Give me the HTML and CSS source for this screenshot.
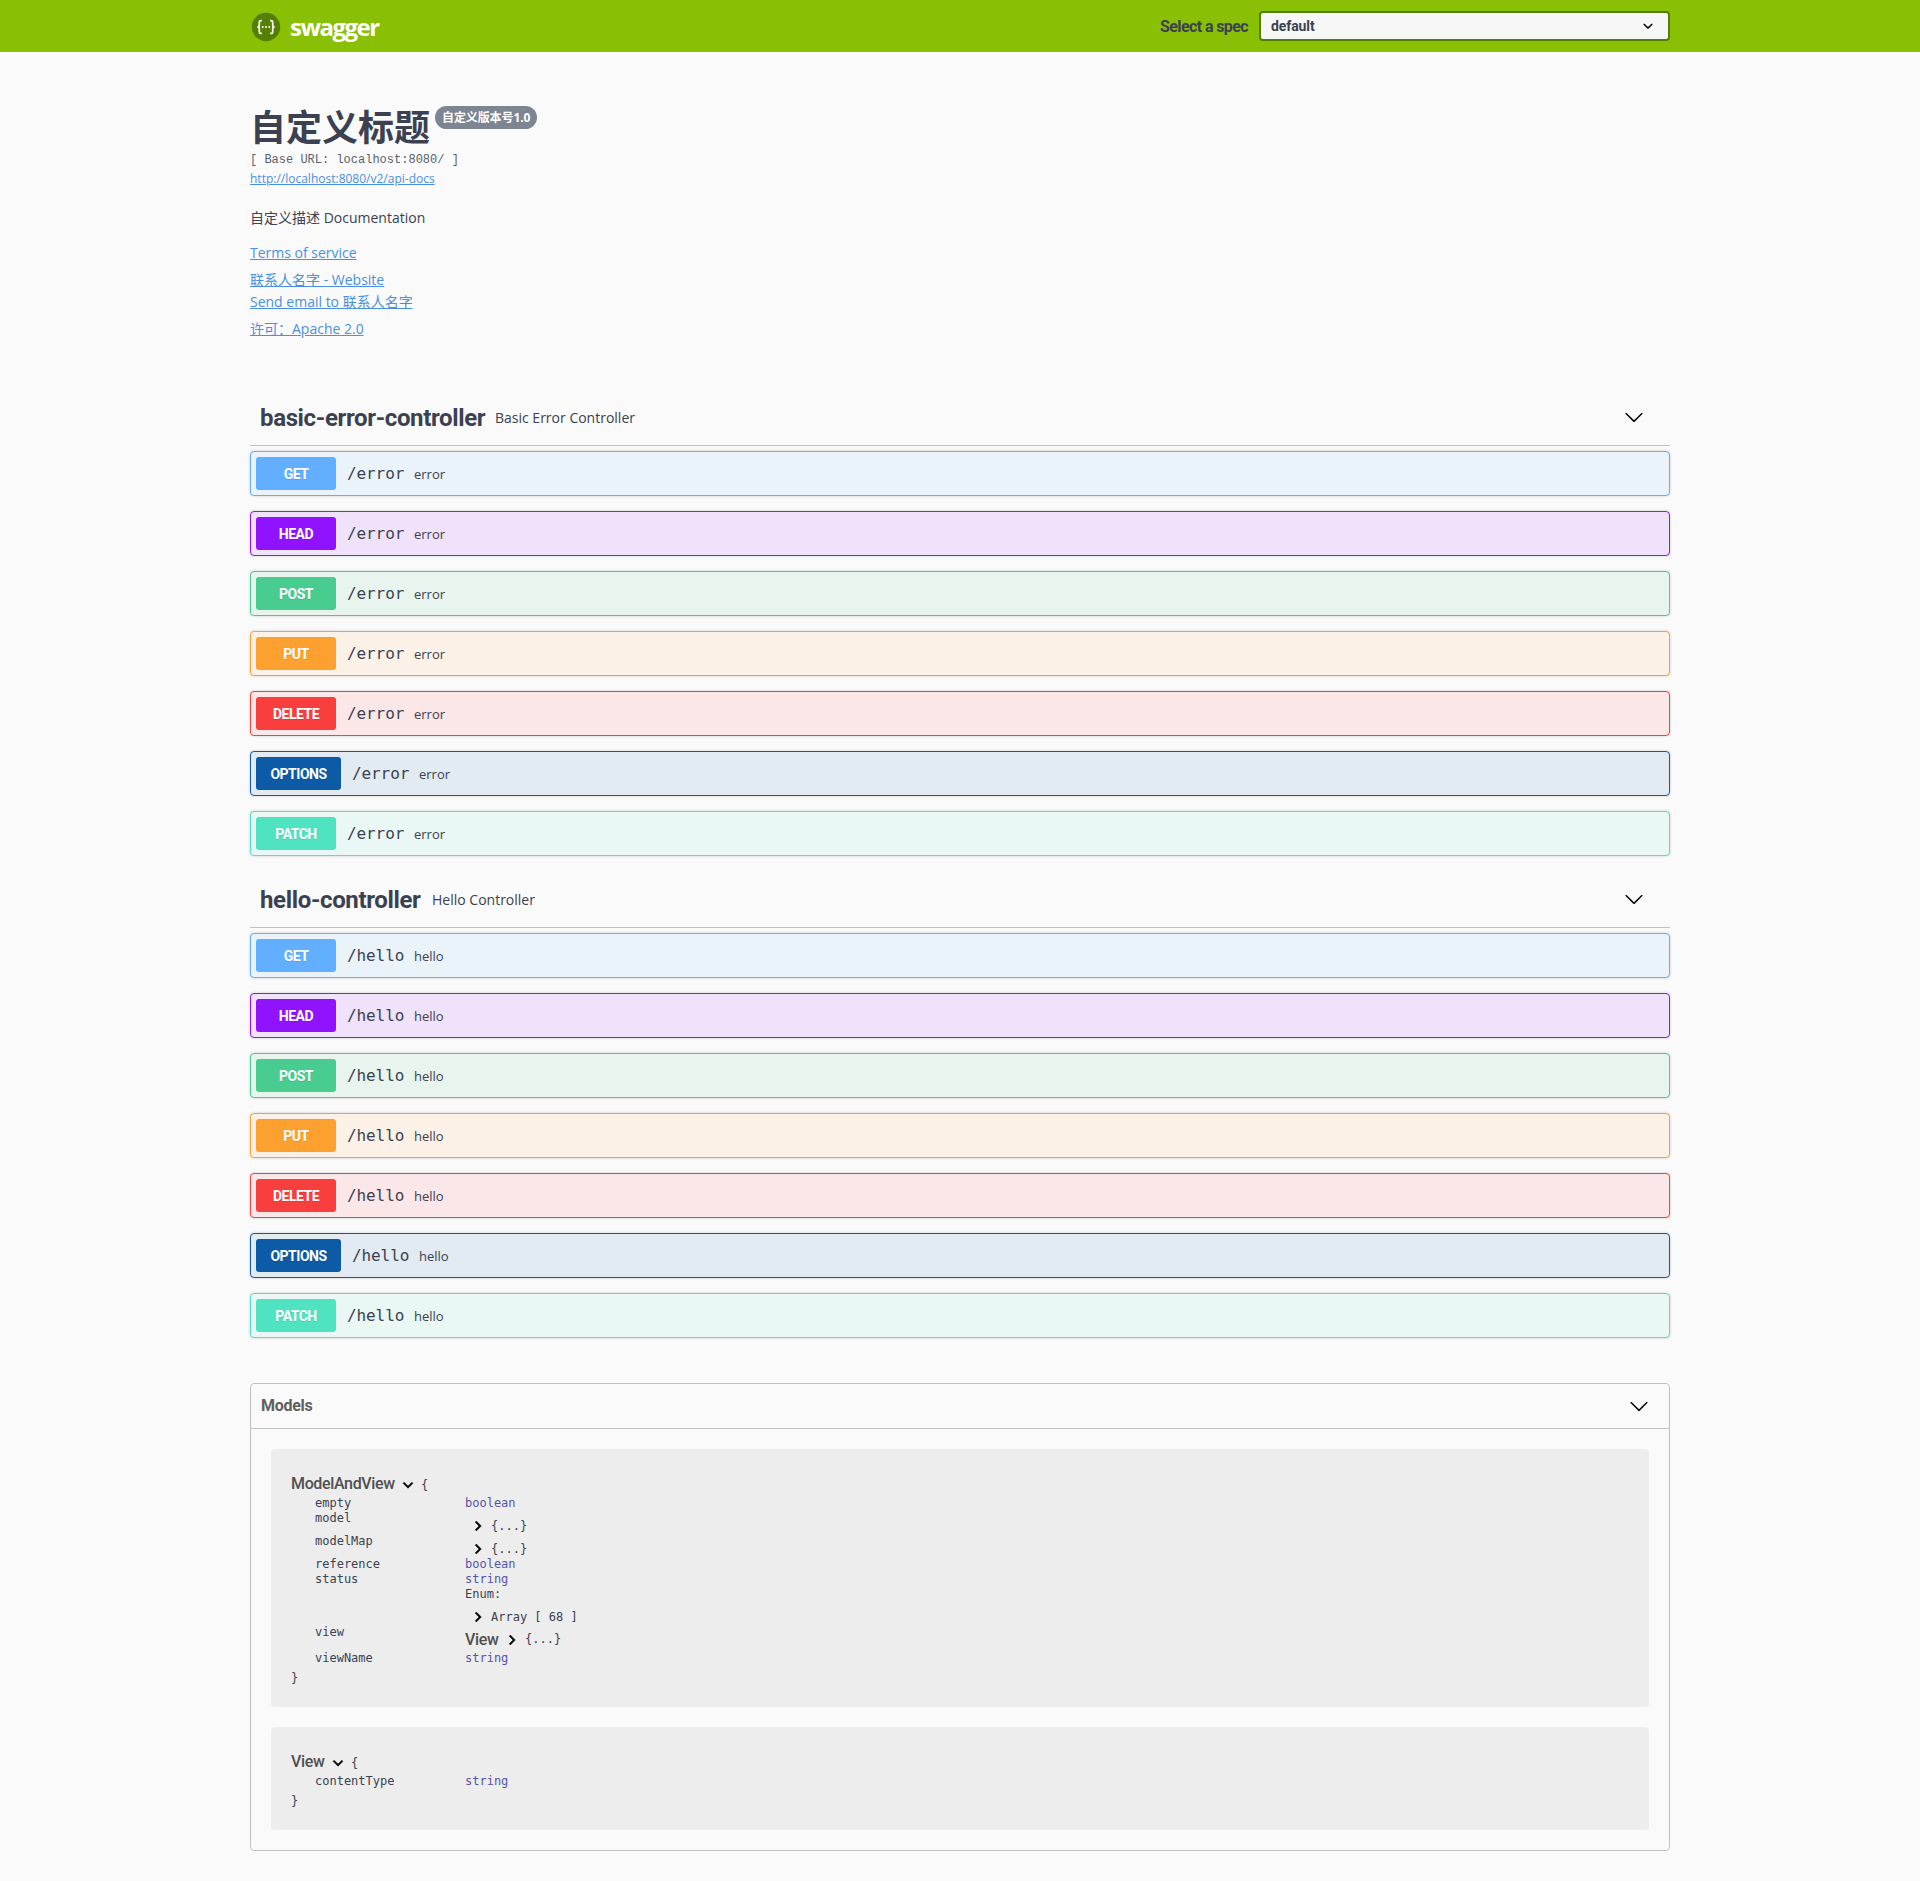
FILE: index.html
```html
<!DOCTYPE html>
<html lang="zh-CN">
<head>
<meta charset="utf-8">
<title>Swagger UI</title>
<link rel="stylesheet" href="styles.css">
</head>
<body>
<svg width="0" height="0" class="symbols">
  <symbol id="large-arrow" viewBox="0 0 20 20"><path d="M17.418 6.109c.272-.268.709-.268.979 0s.271.701 0 .969l-7.908 7.83c-.27.268-.707.268-.979 0l-7.908-7.83c-.27-.268-.27-.701 0-.969s.709-.268.979 0L10 13.25l7.418-7.141z"/></symbol>
  <symbol id="select-arrow" viewBox="0 0 20 20"><path d="M13.418 7.859c.271-.268.709-.268.978 0 .27.268.272.701 0 .969l-3.908 3.83c-.27.268-.707.268-.979 0l-3.908-3.83c-.27-.267-.27-.701 0-.969.271-.268.709-.268.978 0L10 11l3.418-3.141z"/></symbol>
  <symbol id="toggle" viewBox="0 0 24 24"><path d="M10 6L8.59 7.41 13.17 12l-4.58 4.59L10 18l6-6z"/></symbol>
</svg>
<header class="topbar">
  <div class="wrapper topbar-inner">
    <a class="logo">
      <svg width="30" height="30" viewBox="0 0 30 30"><circle cx="15" cy="15" r="14.2" fill="#547f00"/><g fill="none" stroke="#fff" stroke-width="1.7"><path d="M10.8 8.6H10q-1.700 0-1.700 1.700v2.700q0 2-2 2q2 0 2 2v2.700q0 1.700 1.700 1.700h.8"/><path d="M19.200 8.600h.8q1.700 0 1.700 1.700v2.700q0 2 2 2q-2 0-2 2v2.700q0 1.700-1.700 1.700h-.8"/></g><g fill="#fff"><circle cx="11.700" cy="15" r="1"/><circle cx="15" cy="15" r="1"/><circle cx="18.300" cy="15" r="1"/></g></svg>
      <span class="logo-text">swagger</span>
    </a>
    <div class="spec">
      <span class="spec-label">Select a spec</span>
      <div class="select"><span class="select-value">default</span><svg width="20" height="20"><use href="#select-arrow"/></svg></div>
    </div>
  </div>
</header>
<main class="wrapper">
  <section class="info">
    <div class="title-row"><h1 class="title">自定义标题</h1><span class="version">自定义版本号1.0</span></div>
    <div class="base-url">[ Base URL: localhost:8080/ ]</div>
    <a class="link docs-link">http://localhost:8080/v2/api-docs</a>
    <p class="description">自定义描述 Documentation</p>
    <div class="contact"><a class="link">Terms of service</a></div>
    <div class="contact person"><a class="link">联系人名字 - Website</a></div>
    <div class="contact email"><a class="link">Send email to 联系人名字</a></div>
    <div class="contact license"><a class="link">许可：Apache 2.0</a></div>
  </section>

  <section class="tag">
    <div class="tag-head"><h2 class="tag-name tag-error">basic-error-controller</h2><span class="tag-desc">Basic Error Controller</span><svg class="tag-arrow" width="20" height="20"><use href="#large-arrow"/></svg></div>
    <div class="ops">
      <div class="op get"><span class="method">GET</span><span class="path">/error</span><span class="summary">error</span></div>
      <div class="op head"><span class="method">HEAD</span><span class="path">/error</span><span class="summary">error</span></div>
      <div class="op post"><span class="method">POST</span><span class="path">/error</span><span class="summary">error</span></div>
      <div class="op put"><span class="method">PUT</span><span class="path">/error</span><span class="summary">error</span></div>
      <div class="op delete"><span class="method">DELETE</span><span class="path">/error</span><span class="summary">error</span></div>
      <div class="op options"><span class="method">OPTIONS</span><span class="path">/error</span><span class="summary">error</span></div>
      <div class="op patch"><span class="method">PATCH</span><span class="path">/error</span><span class="summary">error</span></div>
    </div>
  </section>

  <section class="tag">
    <div class="tag-head"><h2 class="tag-name tag-hello">hello-controller</h2><span class="tag-desc">Hello Controller</span><svg class="tag-arrow" width="20" height="20"><use href="#large-arrow"/></svg></div>
    <div class="ops">
      <div class="op get"><span class="method">GET</span><span class="path">/hello</span><span class="summary">hello</span></div>
      <div class="op head"><span class="method">HEAD</span><span class="path">/hello</span><span class="summary">hello</span></div>
      <div class="op post"><span class="method">POST</span><span class="path">/hello</span><span class="summary">hello</span></div>
      <div class="op put"><span class="method">PUT</span><span class="path">/hello</span><span class="summary">hello</span></div>
      <div class="op delete"><span class="method">DELETE</span><span class="path">/hello</span><span class="summary">hello</span></div>
      <div class="op options"><span class="method">OPTIONS</span><span class="path">/hello</span><span class="summary">hello</span></div>
      <div class="op patch"><span class="method">PATCH</span><span class="path">/hello</span><span class="summary">hello</span></div>
    </div>
  </section>

  <section class="models">
    <div class="models-head"><h4 class="models-title">Models</h4><svg width="20" height="20"><use href="#large-arrow"/></svg></div>
    <div class="models-body">
      <div class="model">
        <div class="model-head"><span class="model-name name-long">ModelAndView</span><svg class="toggle open" width="20" height="20"><use href="#toggle"/></svg><span>{</span></div>
        <div class="props">
          <span class="prop">empty</span><div class="type">boolean</div>
          <span class="prop">model</span><div class="nested"><svg class="toggle" width="20" height="20"><use href="#toggle"/></svg><span>{...}</span></div>
          <span class="prop">modelMap</span><div class="nested"><svg class="toggle" width="20" height="20"><use href="#toggle"/></svg><span>{...}</span></div>
          <span class="prop">reference</span><div class="type">boolean</div>
          <span class="prop">status</span><div><div class="type">string</div><div>Enum:</div><div class="nested"><svg class="toggle" width="20" height="20"><use href="#toggle"/></svg><span>Array [ 68 ]</span></div></div>
          <span class="prop">view</span><div class="ref"><span class="model-name">View</span><svg class="toggle" width="20" height="20"><use href="#toggle"/></svg><span>{...}</span></div>
          <span class="prop">viewName</span><div class="type">string</div>
        </div>
        <div class="close">}</div>
      </div>
      <div class="model">
        <div class="model-head"><span class="model-name">View</span><svg class="toggle open" width="20" height="20"><use href="#toggle"/></svg><span>{</span></div>
        <div class="props">
          <span class="prop">contentType</span><div class="type">string</div>
        </div>
        <div class="close">}</div>
      </div>
    </div>
  </section>
</main>
</body>
</html>
```
FILE: styles.css
```css
* { box-sizing: border-box; }
body {
  margin: 0;
  background: #fafafa;
  color: #3b4151;
  font-family: "Open Sans", "Noto Sans CJK SC", sans-serif;
  font-size: 14px;
}
h1, h2, h4, p { margin: 0; }
svg { display: block; flex: none; }
.symbols { position: absolute; }
.wrapper { width: 1420px; margin: 0 auto; }

.topbar { height: 52px; background: #89bf04; }
.topbar-inner { display: flex; justify-content: space-between; align-items: center; height: 52px; }
.logo { display: flex; align-items: center; gap: 9px; padding: 1px 0 0 1px; color: #fff; }
.logo-text { font: 700 24px/30px "Open Sans", sans-serif; letter-spacing: -1.5px; }
.spec { display: flex; align-items: center; }
.spec-label { width: 99px; padding-top: 2px; font: 700 16px/20px Roboto, sans-serif; letter-spacing: -0.6px; white-space: nowrap; }
.select {
  display: flex; align-items: center; justify-content: space-between;
  width: 411px; height: 30px; padding: 0 10px;
  border: 2px solid #547f00; border-radius: 4px; background: #f7f7f7;
  font: 700 14px/20px Roboto, sans-serif; letter-spacing: -0.1px;
}
.select svg { fill: #000; }

.info { height: 338px; padding-top: 50px; }
.title-row { display: flex; align-items: flex-start; height: 48px; }
.title { font: 700 36px/46px "Noto Sans CJK SC", sans-serif; }
.version {
  height: 23px; margin: 4px 0 0 5px; padding: 0 7px; width: 102px;
  border-radius: 57px; background: #7d8492; color: #fff;
  font: 700 12px/23px "Open Sans", "Noto Sans CJK SC", sans-serif;
  letter-spacing: -0.1px; white-space: nowrap;
}
.base-url { height: 18px; padding-top: 1px; font: 12px/18px "Liberation Mono", monospace; color: #5a5f6c; white-space: pre; }
.link { color: #4990e2; text-decoration: underline; }
.docs-link { display: block; height: 20px; font-size: 12px; line-height: 22px; }
.description { margin-top: 20px; line-height: 20px; }
.contact { height: 20px; margin-top: 15px; line-height: 20px; }
.person { margin-top: 7px; }
.email { margin-top: 2px; }
.license { margin-top: 7px; }

.tag-head {
  display: flex; align-items: center; height: 56px; margin-bottom: 5px;
  padding: 0 26px 0 10px; border-bottom: 1px solid #bfc1c5;
}
.tag-name { font: 700 24px/30px Roboto, sans-serif; letter-spacing: -0.35px; white-space: nowrap; }
.tag-error { width: 235px; }
.tag-hello { width: 172px; }
.tag-arrow { margin: -2px 0 0 auto; }
.ops { display: grid; gap: 15px; margin-bottom: 16px; }
.op {
  display: flex; align-items: center; height: 45px; padding: 5px;
  border: 1px solid var(--c); border-radius: 4px;
  background: var(--bg); box-shadow: 0 0 3px rgba(0, 0, 0, .19);
}
.method {
  min-width: 80px; height: 33px; border-radius: 3px;
  background: var(--c); color: #fff; text-align: center;
  font: 700 14px/35px Roboto, sans-serif; letter-spacing: -0.5px; text-shadow: 0 1px 0 rgba(0, 0, 0, .1);
}
.options .method { width: 85px; }
.path { margin: 1px 0 0 11px; width: 67px; font: 16px/22px "DejaVu Sans Mono", monospace; letter-spacing: -0.1px; }
.summary { font-size: 13px; line-height: 20px; }
.get { --c: #61affe; --bg: #ebf3fa; }
.head { --c: #9012fe; --bg: #efe2fa; }
.post { --c: #49cc90; --bg: #e8f5ef; }
.put { --c: #fca130; --bg: #fbf1e6; }
.delete { --c: #f93e3e; --bg: #fbe7e7; }
.options { --c: #0d5aa7; --bg: #e2eaf2; }
.patch { --c: #50e3c2; --bg: #e9f8f4; }

.models { margin-top: 45px; border: 1px solid #bfc1c5; border-radius: 4px; }
.models-head {
  display: flex; align-items: center; justify-content: space-between;
  height: 45px; padding: 0 20px 0 10px; border-bottom: 1px solid #bfc1c5;
}
.models-head svg { margin-top: -1px; }
.models-title { font: 700 16px/20px Roboto, sans-serif; letter-spacing: -0.3px; color: #606060; }
.models-body { display: grid; gap: 20px; padding: 20px; }
.model {
  padding: 23px 20px; border-radius: 4px; background: #ededed;
  font: 12px/15px "DejaVu Sans Mono", monospace;
}
.model-head { display: flex; align-items: center; height: 24px; }
.model-name { font: 500 16px/20px Roboto, sans-serif; letter-spacing: -0.35px; color: #505050; width: 35px; }
.name-long { width: 105px; }
.toggle { fill: #000; stroke: #000; stroke-width: .5; }
.open { transform: rotate(90deg); }
.model-head .toggle { margin: 1px 3px 0 2px; }
.model-head span:last-child { margin-top: 2px; }
.props { display: grid; grid-template-columns: 150px 1fr; padding-left: 24px; }
.type { color: #55a; }
.nested { display: flex; align-items: flex-end; height: 23px; padding-left: 3px; gap: 3px; }
.nested .toggle { margin-bottom: -2px; }
.ref { display: flex; align-items: center; height: 26px; padding-top: 3px; }
.ref .toggle { margin: 1px 3px 0 2px; }
.close { height: 18px; padding-top: 5px; }
```
